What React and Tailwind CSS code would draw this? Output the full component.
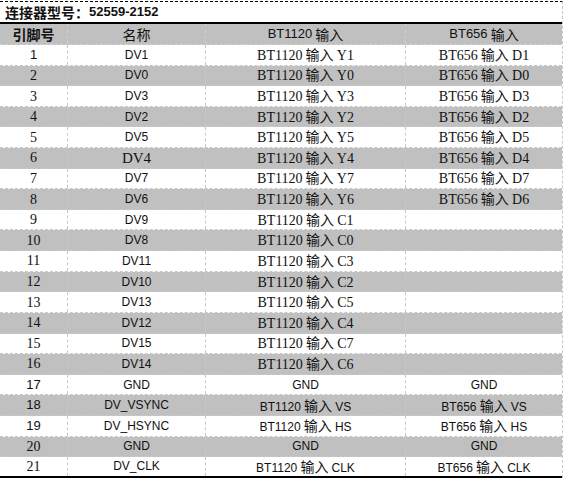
const SANS = "font-['Liberation_Sans','Noto_Sans_CJK_SC',sans-serif] text-[12px]";
const SERIF = "font-['Liberation_Serif','Noto_Sans_CJK_SC',serif] text-[14px]";

// [pin, name, bt1120, bt656, pinSerif, nameSerif, sigSerif]
const rows = [
  ["1", "DV1", "Y1", "D1", false, false, true],
  ["2", "DV0", "Y0", "D0", true, false, true],
  ["3", "DV3", "Y3", "D3", true, false, true],
  ["4", "DV2", "Y2", "D2", true, false, true],
  ["5", "DV5", "Y5", "D5", true, false, true],
  ["6", "DV4", "Y4", "D4", true, true, true],
  ["7", "DV7", "Y7", "D7", true, false, true],
  ["8", "DV6", "Y6", "D6", true, false, true],
  ["9", "DV9", "C1", "", true, false, true],
  ["10", "DV8", "C0", "", true, false, true],
  ["11", "DV11", "C3", "", true, false, true],
  ["12", "DV10", "C2", "", true, false, true],
  ["13", "DV13", "C5", "", true, false, true],
  ["14", "DV12", "C4", "", true, false, true],
  ["15", "DV15", "C7", "", true, false, true],
  ["16", "DV14", "C6", "", true, false, true],
  ["17", "GND", null, null, false, false, false],
  ["18", "DV_VSYNC", "VS", "VS", false, false, false],
  ["19", "DV_HSYNC", "HS", "HS", false, false, false],
  ["20", "GND", null, null, true, false, false],
  ["21", "DV_CLK", "CLK", "CLK", true, false, false],
];

function Signal({ prefix, suffix, serif }) {
  if (suffix === null) return <span className={SANS}>GND</span>;
  if (suffix === "") return null;
  return (
    <span className={serif ? SERIF : SANS}>
      {prefix}
      <span className="font-['Noto_Sans_CJK_SC',sans-serif] text-[14px]"> 输入 </span>
      {suffix}
    </span>
  );
}

export default function App() {
  return (
    <div className="w-[565px] h-[482px] bg-white text-[#111]">
      <div className="pt-px">
        <div className="w-[563px] border-t border-black border-r border-r-[#c8c8c8] border-dashed">
          <div className="h-[22px] flex items-center pl-[5px] border-b-2 border-black border-solid font-bold">
            <span className="font-['Noto_Sans_CJK_SC',sans-serif] text-[14px]">连接器型号：</span>
            <span className="font-['Liberation_Sans',sans-serif] text-[13px]">52559-2152</span>
          </div>

          <div className="h-[21px] flex bg-[#c0c0c0] border-b border-dashed border-[#d0d0d0]">
            <div className="w-[67px] flex items-center justify-center font-bold font-['Noto_Sans_CJK_SC',sans-serif] text-[14px]">引脚号</div>
            <div className="w-[138px] flex items-center justify-center border-l border-dashed border-[#d0d0d0] font-['Noto_Sans_CJK_SC',sans-serif] text-[14px]">名称</div>
            <div className="w-[200px] flex items-center justify-center border-l border-dashed border-[#d0d0d0]">
              <span className={SANS + " text-[13px]"}>BT1120</span>
              <span className="font-['Noto_Sans_CJK_SC',sans-serif] text-[14px]">&nbsp;输入</span>
            </div>
            <div className="w-[157px] flex items-center justify-center border-l border-dashed border-[#d0d0d0]">
              <span className={SANS + " text-[13px]"}>BT656</span>
              <span className="font-['Noto_Sans_CJK_SC',sans-serif] text-[14px]">&nbsp;输入</span>
            </div>
          </div>

          {rows.map((r, i) => {
            const last = i === rows.length - 1;
            return (
              <div
                key={r[0]}
                className={
                  "h-[20.62px] flex " +
                  (i % 2 === 1 ? "bg-[#c0c0c0] " : "bg-white ") +
                  (last ? "border-b-2 border-solid border-black" : "border-b border-dashed border-[#c8c8c8]")
                }
              >
                <div className={"w-[67px] flex items-center justify-center " + (r[4] ? SERIF : SANS + " text-[13px]")}>{r[0]}</div>
                <div className={"w-[138px] flex items-center justify-center border-l border-dashed border-[#c8c8c8] " + (r[5] ? SERIF + " text-[15px]" : SANS)}>{r[1]}</div>
                <div className="w-[200px] flex items-center justify-center border-l border-dashed border-[#c8c8c8]">
                  <Signal prefix="BT1120" suffix={r[2]} serif={r[6]} />
                </div>
                <div className="w-[157px] flex items-center justify-center border-l border-dashed border-[#c8c8c8]">
                  <Signal prefix="BT656" suffix={r[3]} serif={r[6]} />
                </div>
              </div>
            );
          })}
        </div>
      </div>
    </div>
  );
}
